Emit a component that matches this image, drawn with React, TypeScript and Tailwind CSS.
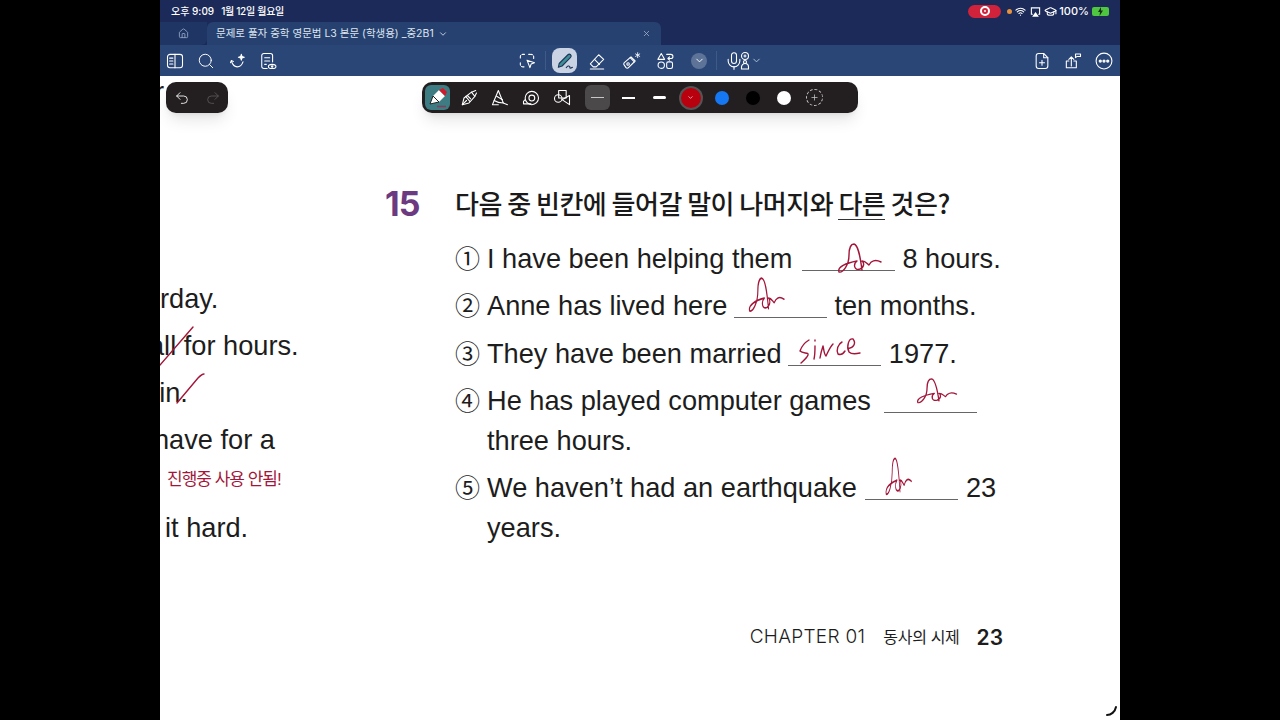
import { ChevronDown, GraduationCap, Home, Mic, Plus, Redo2, Search, Undo2, Wifi, X } from "lucide-react";
import type { ReactNode } from "react";

function Svg({ size = 20, children }: { size?: number; children: ReactNode }) {
  return (
    <svg width={size} height={size} viewBox="0 0 24 24" fill="none" stroke="currentColor" strokeWidth={1.3} strokeLinecap="round" strokeLinejoin="round">
      {children}
    </svg>
  );
}

const PanelIcon = () => (
  <Svg>
    <rect x="3" y="4" width="18" height="16" rx="3" />
    <path d="M12 4v16M5.500 8.500h4M5.500 12h4M5.500 15.500h4" />
  </Svg>
);

const SparkleCurveIcon = () => (
  <Svg>
    <path d="M4 12c1 3 3 7 7 7s6-3 7-6" />
    <path d="M3 14l1-2.500 2.500 1" />
    <path d="M16 4l.8 2.700 2.700.8-2.700.8L16 11l-.8-2.700-2.700-.8 2.700-.8z" fill="currentColor" />
  </Svg>
);

const NoteEyeIcon = () => (
  <Svg>
    <path d="M11 21H7a2.500 2.500 0 0 1-2.500-2.500v-13A2.500 2.500 0 0 1 7 3h8a2.500 2.500 0 0 1 2.500 2.500V13" />
    <path d="M8 8h6M8 12h6M8 16h2" />
    <ellipse cx="17" cy="18.500" rx="4.500" ry="2.500" />
    <circle cx="17" cy="18.500" r="0.800" />
  </Svg>
);

const LassoIcon = () => (
  <Svg>
    <path d="M9 4H7a3 3 0 0 0-3 3v2M14 4h2M4 14v2a3 3 0 0 0 3 3h2M20 9V7a3 3 0 0 0-3-3" strokeDasharray="3 2" />
    <path d="M12 11l9 3-4 1.500-1.500 4.500z" />
  </Svg>
);

const PenIcon = () => (
  <Svg>
    <path d="M5 15L15.500 4.500a2.200 2.200 0 0 1 3.200 3.200L8.500 18 4 19.500z" fill="#3f8f98" />
    <path d="M13.500 20c1.500-2 3-2.500 4-1.500s-.5 2 1 2 2-1 2.500-1" />
  </Svg>
);

const EraserIcon = () => (
  <Svg>
    <path d="M14 4.500l6 5.500-9 9H7.500L4 15.500z" />
    <path d="M9 10l6 6M4 21.500h16" />
  </Svg>
);

const TapeIcon = () => (
  <Svg>
    <path d="M4 14l8-7 5 5-8 8a2 2 0 0 1-3 0l-2-3a2 2 0 0 1 0-3z" />
    <path d="M11 8l5 5" />
    <circle cx="8.500" cy="15.500" r="1.500" />
    <path d="M20 2v6M17.500 3.500l5 3M22.500 3.500l-5 3" strokeWidth={1} />
  </Svg>
);

const ShapesIcon = () => (
  <Svg>
    <path d="M7.500 3l4 7h-8z" />
    <circle cx="7.500" cy="17" r="3.800" />
    <rect x="14" y="13" width="7" height="8" rx="2" />
    <path d="M14 4h5a2 2 0 0 1 0 5h-3M17.500 7l-2 2 2 2" />
  </Svg>
);

const MicPeopleIcon = () => (
  <div className="flex items-center">
    <Mic size={20} strokeWidth={1.3} />
    <svg width="12" height="20" viewBox="0 0 12 20" fill="none" stroke="currentColor" strokeWidth={1.1} className="-ml-[5px]">
      <circle cx="6" cy="5" r="3.500" />
      <path d="M4.500 5h3M6 3.500v3" />
      <circle cx="6" cy="11" r="1.500" />
      <path d="M2.500 18v-2a3 3 0 0 1 7 0v2z" />
    </svg>
  </div>
);

const FileAddIcon = () => (
  <Svg>
    <path d="M14 3H8a3 3 0 0 0-3 3v12a3 3 0 0 0 3 3h8a3 3 0 0 0 3-3V8z" />
    <path d="M14 3v5h5M12 11v6M9 14h6" />
  </Svg>
);

const ShareTagIcon = () => (
  <Svg>
    <path d="M10 7v11M7 10l3-3 3 3" />
    <path d="M7 12H4v8h12v-8h-3" />
    <path d="M15 3.500h6v3h-4l-2 1.500z" />
  </Svg>
);

const MoreIcon = () => (
  <Svg>
    <circle cx="12" cy="12" r="9.500" />
    <circle cx="7.500" cy="12" r="1.300" fill="currentColor" />
    <circle cx="12" cy="12" r="1.300" fill="currentColor" />
    <circle cx="16.500" cy="12" r="1.300" fill="currentColor" />
  </Svg>
);

const MarkerTool = () => (
  <svg width="24" height="24" viewBox="0 0 24 24" fill="none">
    <path d="M4 18l3-8 6 6z" fill="#fff" />
    <path d="M7 10l6-6 6 6-6 6z" fill="#fff" />
    <path d="M13 4l6 6 2-4-4-4z" fill="#d11a2a" />
    <path d="M11 20.500h9" stroke="#8a3a5a" strokeWidth={1.500} />
    <path d="M4 18l3-8 6 6z" stroke="#222" strokeWidth={1} />
  </svg>
);

const FountainTool = () => (
  <Svg>
    <path d="M4 20l2-8 9-7 4 5-7 8z" />
    <path d="M4 20l5-5M10 9l4 4M8 10l5 6M15 5l5-2M19 10l2-4" />
  </Svg>
);

const HighlighterTool = () => (
  <Svg>
    <path d="M10 3L5 15c3 2 7 3 11 3z" />
    <path d="M5 15l-2 5h7M16 18l5 2M8 10l7 4" />
  </Svg>
);

const TapeRollTool = () => (
  <Svg>
    <circle cx="13" cy="12" r="8" />
    <circle cx="13" cy="12" r="3.500" />
    <path d="M5 14l-2 2v3h9" />
  </Svg>
);

const ShapeTool = () => (
  <Svg>
    <rect x="8" y="3" width="9" height="9" />
    <circle cx="7.500" cy="12.500" r="4.500" />
    <path d="M12 14l9-5v11z" />
  </Svg>
);

function ToolCell({ active, gray, children }: { active?: boolean; gray?: boolean; children: ReactNode }) {
  return (
    <div className="flex h-[31px] w-[31px] items-center justify-center">
      <div className={`flex h-[25px] w-[25px] items-center justify-center rounded-md ${active ? "bg-[#3d7c82]" : gray ? "bg-[#4b494a]" : ""}`}>
        {children}
      </div>
    </div>
  );
}

function Blank({ className = "" }: { className?: string }) {
  return <span className={`inline-block w-[93px] translate-y-[3px] border-b-[1.5px] border-[#666] ${className}`} />;
}

const options: { mark: string; body: ReactNode }[] = [
  { mark: "①", body: <>I have been helping them <Blank className="ml-[2px]" /> 8 hours.</> },
  { mark: "②", body: <>Anne has lived here <Blank className="-ml-[1px]" /> ten months.</> },
  { mark: "③", body: <>They have been married <Blank className="-ml-[1px]" /> 1977.</> },
  { mark: "④", body: <>He has played computer games <Blank className="ml-[6px]" /> three hours.</> },
  { mark: "⑤", body: <>We haven’t had an earthquake <Blank className="ml-[1px]" /> 23 years.</> },
];

const forStroke = "M2 29 C6 30 12 22 12 12 C12 5 14 1 17 1 C21 2 23 12 25 27 M2 29 C0 24 9 20 20 18 C16 21 17 28 23 26 C28 24 27 19 25 18 C29 18 30 21 32 22 C34 18 38 16 44 19";

export default function App() {
  return (
    <div className="flex h-screen w-full justify-center bg-black font-['Liberation_Sans','Noto_Sans_CJK_KR',sans-serif]">
      <div className="relative flex h-full w-[960px] flex-col overflow-hidden bg-white">
        {/* status bar */}
        <div className="flex h-[22px] items-center bg-[#1b2a58] pl-[11px] pr-[11px] font-['Inter','Noto_Sans_CJK_KR',sans-serif] text-[10px] font-medium text-white">
          <span>오후 9:09</span>
          <span className="ml-[7px] tracking-[-0.3px]">1월 12일 월요일</span>
          <div className="ml-auto flex items-center">
            <div className="flex h-[13px] w-[33px] items-center justify-center rounded-full bg-[#d0223a]">
              <div className="flex h-[10px] w-[10px] items-center justify-center rounded-full border-[2px] border-white">
                <div className="h-[2px] w-[2px] rounded-full bg-white" />
              </div>
            </div>
            <div className="ml-[6px] h-[5px] w-[5px] rounded-full bg-[#e8923c]" />
            <Wifi size={11} strokeWidth={2.4} className="ml-[3px]" />
            <svg width="11" height="11" viewBox="0 0 12 12" fill="none" stroke="currentColor" strokeWidth={1.2} className="ml-[4px]">
              <path d="M3 9H1.500V2h9v7H9" />
              <path d="M6 7.500L8.500 11h-5z" fill="currentColor" />
            </svg>
            <GraduationCap size={13} className="ml-[3px]" />
            <span className="ml-[2px] text-[11px]">100%</span>
            <div className="relative ml-[3px] flex h-[9px] w-[17px] items-center justify-center rounded-[2px] bg-[#4ec63f]">
              <svg width="7" height="9" viewBox="0 0 7 9"><path d="M4 0L1 5h2L2.500 9 6 3.500H4z" fill="#17301a" /></svg>
            </div>
          </div>
        </div>

        {/* tabs */}
        <div className="flex h-[23px] items-stretch bg-[#1b2a58]">
          <div className="flex w-[47px] items-center justify-center rounded-br-md bg-[#1f3665] text-[#8fa0bd]">
            <Home size={11} />
          </div>
          <div className="flex w-[454px] items-center rounded-t-md bg-[#26416f] pl-[9px] pr-[10px] font-['Inter','Noto_Sans_CJK_KR',sans-serif] text-[10.500px] text-[#dde4ef]">
            <span>문제로 풀자 중학 영문법 L3 본문 (학생용) _중2B1</span>
            <ChevronDown size={10} className="ml-[4px]" />
            <X size={9} className="ml-auto text-[#a8b6cc]" />
          </div>
        </div>

        {/* toolbar */}
        <div className="flex h-[31px] items-center bg-[#2a4676] text-white">
          <div className="flex items-center pl-[5px]">
            <PanelIcon />
            <Search size={18} strokeWidth={1.300} className="ml-[12px]" />
            <div className="ml-[13px]"><SparkleCurveIcon /></div>
            <div className="ml-[10px]"><NoteEyeIcon /></div>
          </div>
          <div className="ml-[239px] flex items-center">
            <LassoIcon />
            <div className="ml-[8px] h-[19px] w-px bg-[#3d5a88]" />
            <div className="ml-[6px] flex h-[25px] w-[25px] items-center justify-center rounded-lg bg-[#c9d3e3] text-[#1f3558]">
              <PenIcon />
            </div>
            <div className="ml-[10px]"><EraserIcon /></div>
            <div className="ml-[14px]"><TapeIcon /></div>
            <div className="ml-[14px]"><ShapesIcon /></div>
            <div className="ml-[16px] flex h-[16px] w-[16px] items-center justify-center rounded-full bg-[#5d7397]">
              <ChevronDown size={11} />
            </div>
            <div className="ml-[9px] h-[19px] w-px bg-[#3d5a88]" />
            <div className="ml-[7px]"><MicPeopleIcon /></div>
            <ChevronDown size={11} className="text-[#b8c5d9]" />
          </div>
          <div className="ml-auto flex items-center gap-[11px] pr-[6px]">
            <FileAddIcon />
            <ShareTagIcon />
            <MoreIcon />
          </div>
        </div>

        {/* page */}
        <div className="flex flex-1 flex-col bg-white text-[#1d1d1d]">
          <div className="flex">
            <div className="w-[225px] shrink-0 overflow-hidden text-[27.200px] whitespace-nowrap">
              <div className="-ml-[5px] h-[199.350px] leading-[32px]">r</div>
              <div className="-ml-[65px] flex h-[47.300px] items-center">yesterday.</div>
              <div className="-ml-[11px] flex h-[47.300px] items-center">all for hours.</div>
              <div className="-ml-[25px] flex h-[47.300px] items-center">rain.</div>
              <div className="-ml-[6px] flex h-[47.300px] items-center">have for a</div>
              <div className="h-[40px] pl-[7px] pt-[3px] text-[17px] leading-[24px] tracking-[-1px] text-[#a3163a]">진행중 사용 안됨!</div>
              <div className="flex h-[47.300px] items-center pl-[5px]">it hard.</div>
            </div>
            <div className="w-[70px] shrink-0 pt-[108px] font-['Inter',sans-serif] text-[34px] leading-[40px] font-bold tracking-[-1px] text-[#6b3a80]">15</div>
            <div className="w-[548px] pt-[107px]">
              <div className="text-[26px] leading-[40px] font-medium tracking-[-0.5px] text-[#1a1a1a] [font-family:'Noto_Sans_CJK_KR',sans-serif]">
                다음 중 빈칸에 들어갈 말이 나머지와 <span className="inline-block border-b-[1.5px] border-[#333] leading-[32px]">다른</span> 것은?
              </div>
              <div className="mt-[16px] flex flex-col gap-[7.300px] text-[27.200px] leading-[40px]">
                {options.map((o) => (
                  <div key={o.mark} className="flex">
                    <span className="w-[32px] shrink-0 text-[25px]">{o.mark}</span>
                    <p>{o.body}</p>
                  </div>
                ))}
              </div>
            </div>
          </div>

          <div className="mt-[70px] flex items-center justify-end pr-[117px]">
            <span className="font-['Inter',sans-serif] text-[19px] font-light tracking-[0.3px]">CHAPTER 01</span>
            <span className="ml-[18px] text-[16px] tracking-[-0.3px]">동사의 시제</span>
            <span className="ml-[17px] font-['Inter',sans-serif] text-[21px] font-semibold">23</span>
          </div>
        </div>

        {/* handwriting on top of the page, in screen coordinates */}
        <svg className="pointer-events-none absolute top-0 -left-[160px]" width="1280" height="720" viewBox="0 0 1280 720" fill="none" stroke="#a3163a" strokeWidth={1.400} strokeLinecap="round" strokeLinejoin="round">
          <path d={forStroke} transform="translate(837 243)" />
          <path d={forStroke} transform="translate(748 277) scale(0.82 1.17)" />
          <path d={forStroke} transform="translate(916 378) scale(0.92 0.85)" />
          <path d={forStroke} transform="translate(885 457) scale(0.6 1.28)" />
          <path d="M809 340C804 343 801 348 800 351C803 354 809 352 808 355C807 358 803 361 801 363M815 346C815 350 815 355 814 359M815 340V341M820 358C821 352 822 349 823 346C824 350 824 354 826 356C828 352 830 347 833 344M842 342C838 344 836 350 838 354C840 355 843 354 845 351M848 348C852 349 857 344 853 339C849 338 846 346 849 352C851 354 856 354 860 353" />
          <path d="M160 365L193 327" />
          <path d="M177 403L198 378C201 375 202 374 204 374" />
        </svg>

        {/* undo pill */}
        <div className="absolute top-[82px] left-[6px] flex h-[31px] w-[62px] items-center justify-center gap-[15px] rounded-[10px] bg-[#231f20] text-white shadow-lg">
          <Undo2 size={16} strokeWidth={1.300} />
          <Redo2 size={16} strokeWidth={1.300} className="text-[#5a5758]" />
        </div>

        {/* pen toolbar */}
        <div className="absolute top-[82px] left-[262px] flex h-[31px] w-[436px] items-center rounded-[10px] bg-[#231f20] text-white shadow-lg">
          <ToolCell active><MarkerTool /></ToolCell>
          <ToolCell><FountainTool /></ToolCell>
          <ToolCell><HighlighterTool /></ToolCell>
          <ToolCell><TapeRollTool /></ToolCell>
          <ToolCell><ShapeTool /></ToolCell>
          <div className="w-[5px]" />
          <ToolCell gray><div className="h-px w-[13px] bg-[#c8c8c8]" /></ToolCell>
          <ToolCell><div className="h-[2px] w-[13px] bg-white" /></ToolCell>
          <ToolCell><div className="h-[3px] w-[13px] rounded-sm bg-white" /></ToolCell>
          <ToolCell>
            <div className="flex h-[20px] w-[20px] items-center justify-center rounded-full bg-[#b8000e] ring-2 ring-[#565354]">
              <ChevronDown size={7} />
            </div>
          </ToolCell>
          <ToolCell><div className="h-[14px] w-[14px] rounded-full bg-[#1677f2]" /></ToolCell>
          <ToolCell><div className="h-[14px] w-[14px] rounded-full bg-black" /></ToolCell>
          <ToolCell><div className="h-[14px] w-[14px] rounded-full bg-white" /></ToolCell>
          <ToolCell>
            <div className="flex h-[17px] w-[17px] items-center justify-center rounded-full border border-dashed border-[#c8c8c8]">
              <Plus size={9} className="text-[#c8c8c8]" />
            </div>
          </ToolCell>
        </div>

        {/* corner mark */}
        <svg className="absolute right-[2px] bottom-[3px]" width="12" height="12" viewBox="0 0 12 12" fill="none" stroke="#111" strokeWidth={2} strokeLinecap="round">
          <path d="M1 10C5 10 9 7 10 2" />
        </svg>
      </div>
    </div>
  );
}
